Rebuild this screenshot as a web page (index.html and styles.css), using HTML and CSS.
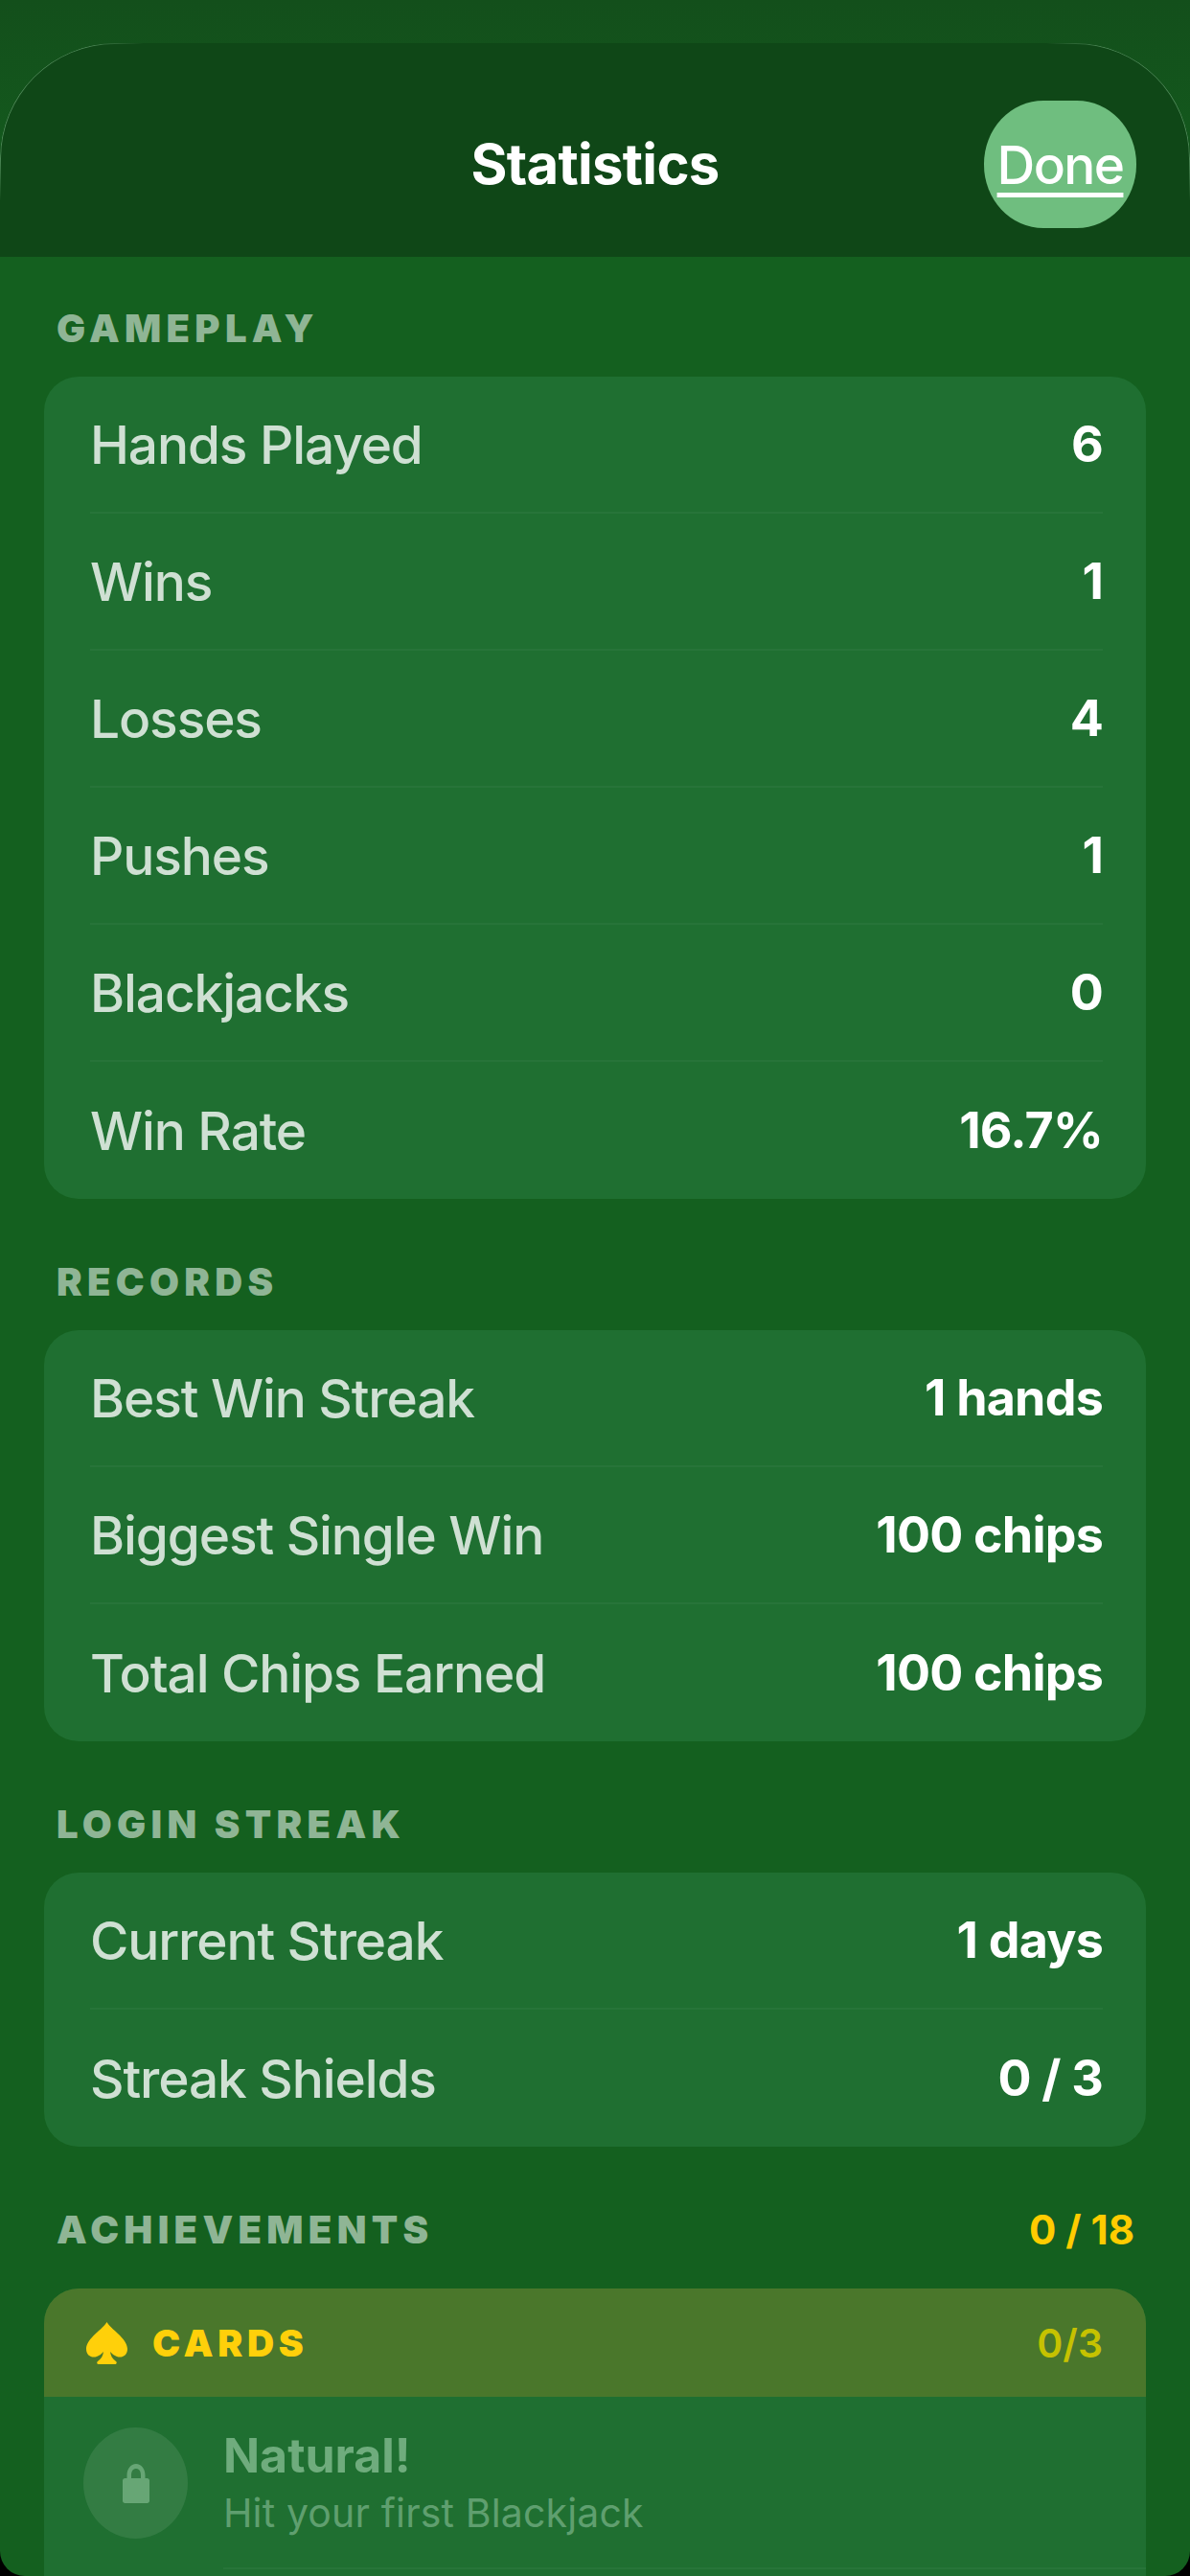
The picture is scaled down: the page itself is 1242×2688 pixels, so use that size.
FILE: index.html
```html
<!DOCTYPE html>
<html lang="en">
<head>
<meta charset="utf-8">
<title>Statistics</title>
<link rel="stylesheet" href="styles.css">
</head>
<body>
<div class="screen">
  <header class="topbar">
    <h1 class="title">Statistics</h1>
    <a class="done" href="#">Done</a>
  </header>
  <main class="content">
    <section class="section">
      <h2 class="heading">GAMEPLAY</h2>
      <div class="card">
        <div class="row"><span class="label">Hands Played</span><span class="value">6</span></div>
        <div class="row"><span class="label">Wins</span><span class="value">1</span></div>
        <div class="row"><span class="label">Losses</span><span class="value">4</span></div>
        <div class="row"><span class="label">Pushes</span><span class="value">1</span></div>
        <div class="row"><span class="label">Blackjacks</span><span class="value">0</span></div>
        <div class="row"><span class="label">Win Rate</span><span class="value">16.7%</span></div>
      </div>
    </section>
    <section class="section">
      <h2 class="heading">RECORDS</h2>
      <div class="card">
        <div class="row"><span class="label">Best Win Streak</span><span class="value">1 hands</span></div>
        <div class="row"><span class="label">Biggest Single Win</span><span class="value">100 chips</span></div>
        <div class="row"><span class="label">Total Chips Earned</span><span class="value">100 chips</span></div>
      </div>
    </section>
    <section class="section">
      <h2 class="heading">LOGIN STREAK</h2>
      <div class="card">
        <div class="row"><span class="label">Current Streak</span><span class="value">1 days</span></div>
        <div class="row"><span class="label">Streak Shields</span><span class="value">0 / 3</span></div>
      </div>
    </section>
    <section class="section">
      <div class="heading-row">
        <h2 class="heading">ACHIEVEMENTS</h2>
        <span class="total">0 / 18</span>
      </div>
      <div class="card card-open">
        <div class="group-head">
          <svg class="spade" viewBox="0 0 43 44" aria-hidden="true"><path d="M21.500 0C25 7 43 17 43 28C43 35 37 38 32 36C29 35 27 33 25 31C25.500 35 27 38 31 41C32.500 42.500 31.500 44 30 44H13C11.500 44 10.500 42.500 12 41C16 38 17.500 35 18 31C16 33 14 35 11 36C6 38 0 35 0 28C0 17 18 7 21.500 0Z"/></svg>
          <span class="group-name">CARDS</span>
          <span class="group-count">0/3</span>
        </div>
        <div class="achievement">
          <div class="badge">
            <svg class="lock" viewBox="0 0 28 41" aria-hidden="true"><path fill-rule="evenodd" d="M4.500 15V12C4.500 5 8.500 0 14 0C19.500 0 23.500 5 23.500 12V15H25.500C27 15 28 16 28 17.500V38.500C28 40 27 41 25.500 41H2.500C1 41 0 40 0 38.500V17.500C0 16 1 15 2.500 15ZM9 15H19V12C19 7.500 17 5 14 5C11 5 9 7.500 9 12Z"/></svg>
          </div>
          <div class="ach-text">
            <div class="ach-name">Natural!</div>
            <div class="ach-desc">Hit your first Blackjack</div>
          </div>
        </div>
      </div>
    </section>
  </main>
</div>
</body>
</html>
```

FILE: styles.css
```css
* { box-sizing: border-box; }
html { background: #000; }
body {
  margin: 0;
  width: 1242px;
  height: 2688px;
  overflow: hidden;
  font-family: Inter, "Liberation Sans", sans-serif;
  -webkit-font-smoothing: antialiased;
}
.screen {
  width: 1242px;
  height: 2688px;
  overflow: hidden;
  border-radius: 0 0 26px 26px;
  background: linear-gradient(180deg, #134f1b 0, #14601f 270px, #14601f 100%);
  padding-top: 45px;
}
.topbar {
  position: relative;
  height: 223px;
  padding-top: 28px;
  background: #0f4717;
  border-radius: 120px 120px 0 0;
  display: flex;
  align-items: center;
  justify-content: center;
}
.topbar::before {
  content: "";
  position: absolute;
  inset: 0;
  border: 1px solid rgba(150, 210, 160, 0.45);
  border-bottom: 0;
  border-radius: 120px 120px 0 0;
  -webkit-mask-image: linear-gradient(90deg, #000 0, #000 90px, transparent 150px, transparent 1092px, #000 1152px, #000 100%), linear-gradient(180deg, #000 0, #000 120px, transparent 165px);
  -webkit-mask-composite: source-in;
  mask-composite: intersect;
}
.title {
  margin: 0;
  font-size: 58px;
  font-weight: 700;
  color: #fff;
  letter-spacing: -0.7px;
}
.done {
  position: absolute;
  top: 60px;
  right: 56px;
  width: 159px;
  height: 133px;
  border-radius: 62px / 66px;
  background: #6fbe7f;
  color: #fff;
  font-size: 55px;
  font-weight: 500;
  letter-spacing: -1.600px;
  text-decoration: underline;
  text-decoration-thickness: 4.500px;
  text-underline-offset: 9px;
  display: flex;
  align-items: center;
  justify-content: center;
}
.content {
  padding: 0 46px;
}
.section { margin-top: 62px; }
.section:first-child { margin-top: 50px; }
.heading {
  margin: 0;
  height: 50px;
  line-height: 50px;
  padding-left: 13px;
  margin-bottom: 25px;
  font-size: 40px;
  font-weight: 900;
  letter-spacing: 5.300px;
  color: #8fb595;
}
.heading-row {
  display: flex;
  justify-content: space-between;
  align-items: flex-start;
  margin-bottom: 11px;
}
.total {
  font-size: 42px;
  line-height: 50px;
  font-weight: 700;
  color: #ffcc00;
  padding-right: 12px;
}
.card {
  background: #1f6f31;
  border-radius: 36px;
  overflow: hidden;
}
.card-open { padding-bottom: 80px; }
.row {
  height: 143px;
  margin: 0 45px 0 48px;
  display: flex;
  align-items: center;
  justify-content: space-between;
  border-bottom: 2px solid rgba(255, 255, 255, 0.04);
}
.row:last-child { border-bottom: 0; }
.label {
  font-size: 55px;
  font-weight: 500;
  letter-spacing: -1.100px;
  color: #cfe0d3;
}
.value {
  font-size: 52px;
  font-weight: 700;
  letter-spacing: -0.8px;
  color: #fff;
}
.group-head {
  height: 113px;
  background: #4a772b;
  display: flex;
  align-items: center;
  padding: 0 45px 0 44px;
}
.spade {
  width: 43px;
  height: 44px;
  fill: #ffd00a;
  margin-right: 26px;
}
.group-name {
  font-size: 39px;
  font-weight: 900;
  letter-spacing: 4.700px;
  color: #ffd00a;
}
.group-count {
  margin-left: auto;
  font-size: 41px;
  font-weight: 600;
  color: #c6c200;
}
.achievement {
  height: 180px;
  margin-left: 41px;
  display: flex;
  align-items: center;
}
.badge {
  width: 109px;
  height: 116px;
  border-radius: 50%;
  background: rgba(255, 255, 255, 0.09);
  display: flex;
  align-items: center;
  justify-content: center;
  flex: none;
}
.lock {
  width: 28px;
  height: 41px;
  fill: #67a675;
}
.ach-text {
  margin-left: 37px;
  flex: 1;
  align-self: stretch;
  padding-top: 3px;
  border-bottom: 2px solid rgba(255, 255, 255, 0.04);
  display: flex;
  flex-direction: column;
  justify-content: center;
}
.ach-name {
  font-size: 50px;
  font-weight: 700;
  color: #6fac7d;
  line-height: 60px;
}
.ach-desc {
  font-size: 41px;
  letter-spacing: 0.15px;
  color: #5f9f6f;
  line-height: 60px;
}
```
